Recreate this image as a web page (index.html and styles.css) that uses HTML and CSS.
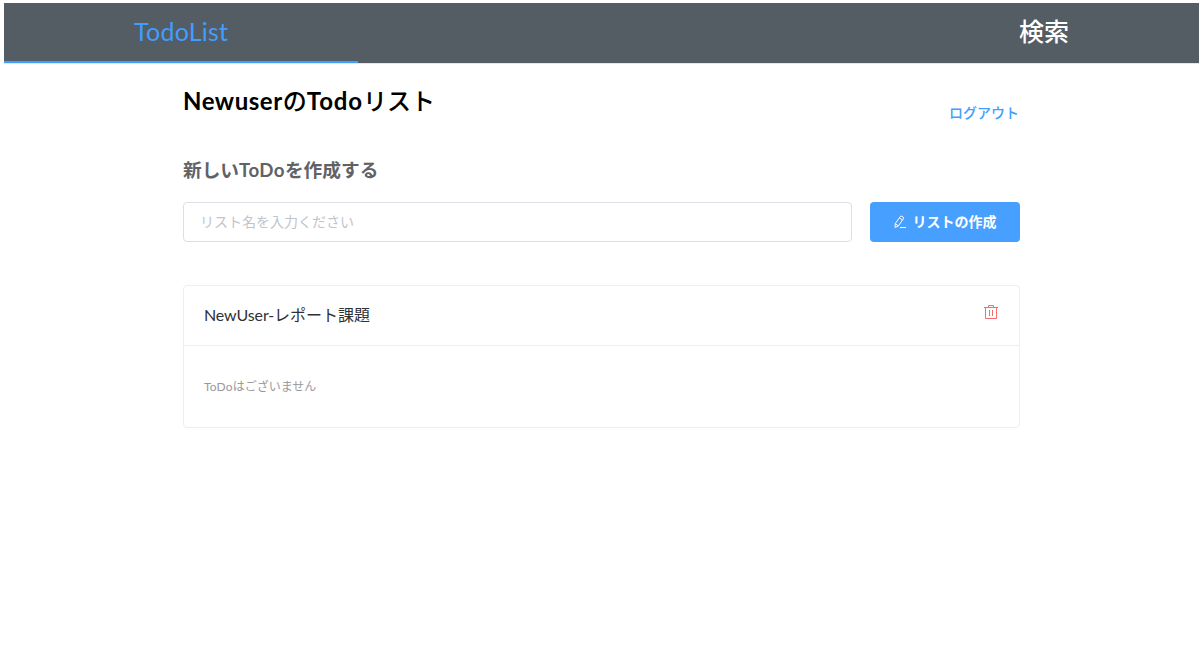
FILE: index.html
```html
<!DOCTYPE html>
<html lang="ja">
<head>
<meta charset="utf-8">
<title>TodoList</title>
<link rel="stylesheet" href="styles.css">
</head>
<body>
<header class="header">
  <a class="brand">TodoList</a>
  <a class="search">検索</a>
</header>
<main class="main">
  <div class="heading">
    <h1 class="title"><span class="title-name">Newuser</span>の<span class="title-todo">Todo</span>リスト</h1>
    <a class="logout">ログアウト</a>
  </div>
  <h2 class="subtitle">新しい<span class="subtitle-todo">ToDo</span>を作成する</h2>
  <form class="form">
    <input class="input" type="text" placeholder="リスト名を入力ください">
    <button class="button" type="button">
      <svg class="edit-icon" viewBox="0 0 14 14"><path d="M2.2 8.7 7.2 1.6Q8 .7 9 1.3l1 .7q1 .8.4 1.8L5.4 10.9l-3.3 1.6zM6.4 2.8l3.1 2.2M2.2 8.7l3.2 2.2M7 12.5h6"/></svg>
      <span>リストの作成</span>
    </button>
  </form>
  <section class="card">
    <div class="card-head">
      <span class="card-title"><span class="card-user">NewUser-</span>レポート課題</span>
      <svg class="trash-icon" viewBox="0 0 16 16"><path d="M1 3.5h14M5.5 3.5v-2h5v2M2.5 3.5v11h11v-11M6.5 6v6M9.5 6v6"/></svg>
    </div>
    <p class="empty"><span class="empty-todo">ToDo</span>はございません</p>
  </section>
</main>
</body>
</html>
```
FILE: styles.css
```css
* { box-sizing: border-box; }
body {
  margin: 0;
  padding: 3px 3px 0 4px;
  background: #fff;
  font-family: Lato, "Noto Sans CJK JP", sans-serif;
}
.header {
  display: flex;
  justify-content: space-between;
  height: 61px;
  padding: 0 130px;
  background: linear-gradient(#409eff, #409eff) 0 58px / 354px 2px no-repeat, #545c64;
  border-bottom: 1px solid #e6e6e6;
  font-size: 25px;
  line-height: 57px;
}
.brand { color: #409eff; letter-spacing: 0.25px; }
.search { color: #fff; font-weight: 500; }
.main { width: 837px; margin-left: 179px; }
.heading { display: flex; justify-content: space-between; height: 76px; }
.title { margin: 19px 0 0; font-size: 24px; line-height: 36px; font-weight: 500; white-space: nowrap; }
.title-name { font-weight: 700; letter-spacing: 0.55px; }
.title-todo { font-weight: 700; letter-spacing: 0.9px; }
.logout { margin: 39px 1px 0 0; color: #409eff; font-size: 14px; line-height: 20px; font-weight: 500; }
.subtitle { margin: 16px 0 0; color: #606266; font-size: 18.7px; line-height: 28px; white-space: nowrap; }
.subtitle-todo { letter-spacing: 0.4px; }
.form { display: flex; gap: 18px; margin-top: 18px; }
.input {
  flex: 1;
  height: 40px;
  padding: 0 15px 2px 16px;
  border: 1px solid #dcdfe6;
  border-radius: 4px;
  font: 14px Lato, "Noto Sans CJK JP", sans-serif;
}
.input::placeholder { color: #c0c4cc; opacity: 1; }
.button {
  display: flex;
  align-items: center;
  justify-content: center;
  gap: 6px;
  width: 150px;
  height: 40px;
  padding: 0 1px 0 0;
  border: 0;
  border-radius: 4px;
  background: #479fff;
  color: #fff;
  font: 700 14px Lato, "Noto Sans CJK JP", sans-serif;
}
.button span { padding-bottom: 2px; }
.edit-icon, .trash-icon { fill: none; stroke: currentColor; stroke-width: 1; }
.edit-icon { width: 14px; height: 14px; }
.card { height: 143px; margin-top: 43px; border: 1px solid #ebeef5; border-radius: 4px; }
.card-head {
  display: flex;
  justify-content: space-between;
  height: 60px;
  padding: 18px 20px 0;
  border-bottom: 1px solid #ebeef5;
}
.card-title { margin-top: -1px; color: #303133; font-size: 16px; line-height: 24px; white-space: nowrap; }
.card-user { letter-spacing: -0.12px; }
.trash-icon { width: 16px; height: 16px; color: #f56c6c; }
.empty { margin: 32px 20px 0; color: #999; font-size: 12px; line-height: 18px; }
.empty-todo { letter-spacing: 0.15px; }
```
